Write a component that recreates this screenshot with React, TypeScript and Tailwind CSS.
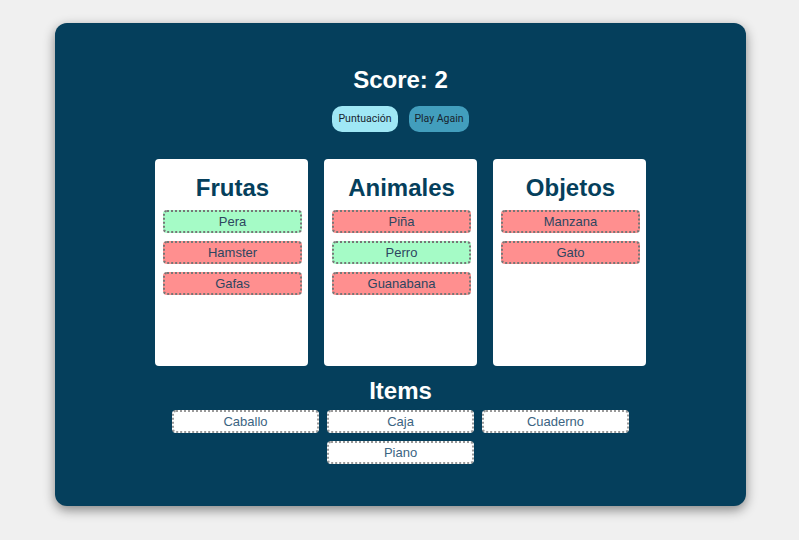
import React from 'react';

type Item = { name: string; ok: boolean };

const columns: { title: string; items: Item[] }[] = [
  { title: 'Frutas', items: [{ name: 'Pera', ok: true }, { name: 'Hamster', ok: false }, { name: 'Gafas', ok: false }] },
  { title: 'Animales', items: [{ name: 'Piña', ok: false }, { name: 'Perro', ok: true }, { name: 'Guanabana', ok: false }] },
  { title: 'Objetos', items: [{ name: 'Manzana', ok: false }, { name: 'Gato', ok: false }] },
];

const pool = ['Caballo', 'Caja', 'Cuaderno', 'Piano'];

export default function App() {
  return (
    <div className="w-[799px] h-[540px] bg-[#f0f0f0] pt-[23px] pl-[55px]" style={{ fontFamily: '"Liberation Sans", Arial, sans-serif' }}>
      <div className="w-[691px] h-[483px] bg-[#053f5c] rounded-[12px] shadow-[0_4px_12px_rgba(0,0,0,0.45)] flex flex-col items-center pt-[42px]">
        <h1 className="text-white font-bold text-[24px] leading-[30px]">Score: 2</h1>

        <div className="flex gap-[11px] mt-[11px]">
          <button className="h-[26px] w-[66px] rounded-[10px] bg-[#9fe7f5] text-[#17242e] text-[10.5px]" style={{ fontFamily: 'Roboto, sans-serif' }}>
            Puntuación
          </button>
          <button className="h-[26px] w-[60px] rounded-[10px] bg-[#429ebd] text-[#17242e] text-[10.5px]" style={{ fontFamily: 'Roboto, sans-serif' }}>
            Play Again
          </button>
        </div>

        {/* Categories */}
        <div className="flex gap-[16px] mt-[27px]">
          {columns.map((col) => (
            <div key={col.title} className="w-[153px] h-[207px] bg-white rounded-[4px] pl-[8px] pr-[6px] pt-[14px]">
              <h2 className="text-center text-[#053f5c] font-bold text-[24px] leading-[30px] mb-[7px]">{col.title}</h2>
              <div className="flex flex-col gap-[8px]">
                {col.items.map((it) => (
                  <div
                    key={it.name}
                    className={`h-[23px] rounded-[4px] border-2 border-dotted border-[#777] flex items-center justify-center text-[13px] text-[#2d4660] ${it.ok ? 'bg-[#a5fbc6]' : 'bg-[#ff8f8f]'}`}
                  >
                    {it.name}
                  </div>
                ))}
              </div>
            </div>
          ))}
        </div>

        {/* Pool */}
        <h2 className="text-white font-bold text-[24px] leading-[30px] mt-[10px]">Items</h2>
        <div className="w-[470px] flex flex-wrap justify-center gap-[8px] mt-[4px]">
          {pool.map((p) => (
            <div
              key={p}
              className="w-[147px] h-[23px] bg-white rounded-[4px] border-2 border-dotted border-[#999] flex items-center justify-center text-[13px] text-[#3b6482]"
            >
              {p}
            </div>
          ))}
        </div>
      </div>
    </div>
  );
}
